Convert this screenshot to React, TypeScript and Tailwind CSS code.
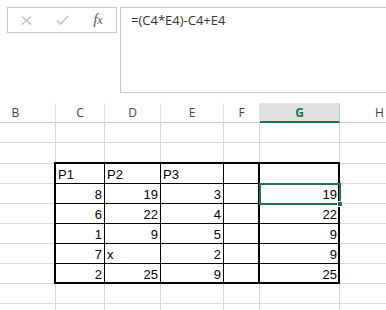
import React from "react";

const COLS = ["B", "C", "D", "E", "F", "G", "H"];
const COL_START = ["col-start-1", "col-start-2", "col-start-3", "col-start-4", "col-start-5", "col-start-6", "col-start-7"];
const ROW_START = [
  "row-start-1", "row-start-2", "row-start-3", "row-start-4", "row-start-5", "row-start-6",
  "row-start-7", "row-start-8", "row-start-9", "row-start-10", "row-start-11", "row-start-12",
];

type Cell = { t?: string; align?: "l" | "r" };

const TABLE: Cell[][] = [
  [{ t: "P1", align: "l" }, { t: "P2", align: "l" }, { t: "P3", align: "l" }, {}, {}],
  [{ t: "8" }, { t: "19" }, { t: "3" }, {}, { t: "19" }],
  [{ t: "6" }, { t: "22" }, { t: "4" }, {}, { t: "22" }],
  [{ t: "1" }, { t: "9" }, { t: "5" }, {}, { t: "9" }],
  [{ t: "7" }, { t: "x", align: "l" }, { t: "2" }, {}, { t: "9" }],
  [{ t: "2" }, { t: "25" }, { t: "9" }, {}, { t: "25" }],
];

function GridCell({ text, align, black, r, c }: { text?: string; align?: "l" | "r"; black?: boolean; r: number; c: number }) {
  return (
    <div
      className={
        ROW_START[r] + " " + COL_START[c] + " " +
        "border-r border-b overflow-hidden whitespace-nowrap text-[13px] leading-[21px] text-black " +
        (black ? "border-black " : "border-[#d9d9d9] ") +
        (align === "l" ? "pl-[2px] text-left" : "pr-[2px] text-right")
      }
      style={{ fontFamily: '"Liberation Sans", Arial, sans-serif' }}
    >
      {text}
    </div>
  );
}

export default function App() {
  const cells: React.ReactNode[] = [];
  // header
  COLS.forEach((c, ci) => {
    const sel = c === "G";
    cells.push(
      <div
        key={"h" + c}
        className={
          "row-start-1 " + COL_START[ci] + " flex items-center justify-center text-[12px] leading-[19px] " +
          (sel
            ? "bg-[#e1e1e1] border-b-2 border-b-[#217346] border-r border-r-[#c6c6c6] text-[#217346] font-bold"
            : "border-r border-b border-r-[#e1e1e1] border-b-[#c6c6c6] text-[#444444]")
        }
        style={{ fontFamily: '"Open Sans", "Noto Sans", sans-serif' }}
      >
        {c}
      </div>
    );
  });
  // two empty rows
  for (let r = 1; r <= 2; r++) {
    COLS.forEach((c, ci) => cells.push(<GridCell key={`e${r}${c}`} r={r} c={ci} />));
  }
  // table rows
  TABLE.forEach((row, ti) => {
    const r = ti + 3;
    cells.push(<GridCell key={`t${ti}B`} r={r} c={0} />);
    row.slice(0, 4).forEach((cell, ci) =>
      cells.push(<GridCell key={`t${ti}${ci}`} text={cell.t} align={cell.align} black r={r} c={ci + 1} />)
    );
    cells.push(<GridCell key={`t${ti}G`} text={row[4].t} align={row[4].align} black r={r} c={5} />);
    cells.push(<GridCell key={`t${ti}H`} r={r} c={6} />);
  });
  // trailing rows
  for (let r = 9; r <= 11; r++) {
    COLS.forEach((c, ci) => cells.push(<GridCell key={`z${r}${c}`} r={r} c={ci} />));
  }

  return (
    <div
      className="w-[386px] h-[310px] overflow-hidden bg-white flex flex-col"
      style={{ fontFamily: '"Open Sans", "Noto Sans", sans-serif' }}
    >
      {/* formula bar */}
      <div className="flex items-start pt-[7px] pl-[7px] gap-[3px] h-[103px] shrink-0">
        <div className="w-[110px] h-[26px] border border-[#c6c6c6] flex items-center">
          <div className="w-[36px] flex justify-center">
            <svg width="11" height="9" viewBox="0 0 11 9">
              <path d="M1 0.5 L10 8.5 M10 0.5 L1 8.5" stroke="#bdbdbd" strokeWidth="1.2" fill="none" />
            </svg>
          </div>
          <div className="w-[36px] flex justify-center">
            <svg width="13" height="10" viewBox="0 0 13 10">
              <path d="M0.8 5.2 L4.6 9 L12.3 0.8" stroke="#bdbdbd" strokeWidth="1.3" fill="none" />
            </svg>
          </div>
          <div
            className="w-[36px] flex justify-center italic text-[14px] leading-none text-[#505050]"
            style={{ fontFamily: '"Liberation Serif", "DejaVu Serif", serif' }}
          >
            <span>
              f<span className="text-[12px]">x</span>
            </span>
          </div>
        </div>
        <div className="flex-1 h-[86px] border border-[#c6c6c6] mr-[-2px] pl-[10px] pt-[3px] text-[13px] leading-[18px] text-[#333333]">
          =(C4*E4)-C4+E4
        </div>
      </div>

      {/* sheet grid */}
      <div className="grid ml-[-24px] grid-cols-[80px_49px_56px_63px_36px_80px_80px] grid-rows-[20px_20px_21px_repeat(9,20px)] shrink-0">
        {cells}
        {/* thick border around C:F table */}
        <div className="col-start-2 col-end-6 row-start-4 row-end-10 -ml-[2px] -mt-[2px] border-2 border-black pointer-events-none z-10" />
        {/* thick border around G block */}
        <div className="col-start-6 col-end-7 row-start-4 row-end-10 -ml-[2px] -mt-[2px] border-2 border-black pointer-events-none z-10" />
        {/* selection */}
        <div className="col-start-6 col-end-7 row-start-5 row-end-6 -ml-[1px] -mt-[1px] -mr-[1px] -mb-[1px] border-2 border-[#217346] relative z-20 pointer-events-none">
          <div className="absolute right-[-4px] bottom-[-4px] w-[6px] h-[6px] bg-[#217346] border border-white" />
        </div>
      </div>
    </div>
  );
}
